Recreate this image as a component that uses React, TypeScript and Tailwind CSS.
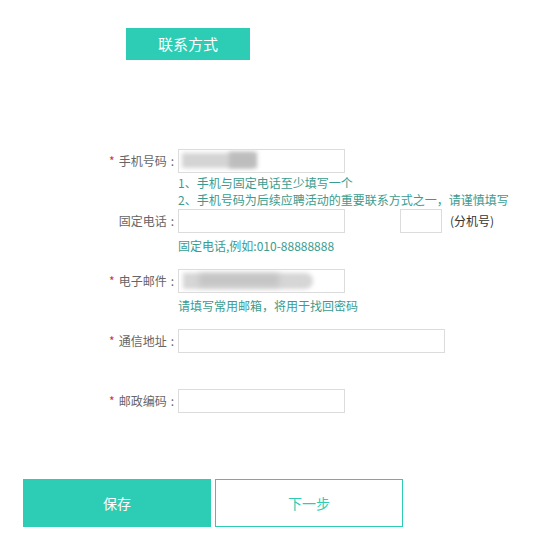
import React from "react"

const font = { fontFamily: '"Noto Sans CJK SC", "Noto Sans", sans-serif' }

function Label({ text, required }: { text: string; required?: boolean }) {
  return (
    <div className="w-[178px] shrink-0 h-[24px] flex items-center justify-end pr-[4px] text-[12px] text-[#666]">
      {required && <span className="text-[#e0302f] mr-[4px] text-[12px]">*</span>}
      <span>{text}</span>
      <span className="ml-[4px]">:</span>
    </div>
  )
}

function Input({ className = "", children }: { className?: string; children?: React.ReactNode }) {
  return (
    <div className={`relative h-[24px] border border-[#dcdcdc] bg-white overflow-hidden ${className}`}>
      {children}
    </div>
  )
}

function Hint({ children, className = "" }: { children: React.ReactNode; className?: string }) {
  return <div className={`text-[12px] leading-[17px] text-[#3a9c8f] ${className}`}>{children}</div>
}

export default function App() {
  return (
    <div className="w-[550px] h-[540px] bg-white relative" style={font}>
      <div className="pt-[28px] pl-[126px]">
        <div className="w-[124px] h-[32px] bg-[#2ccdb4] text-white text-[15px] flex items-center justify-center">
          联系方式
        </div>
      </div>

      <div className="mt-[89px]">
        {/* 手机号码 */}
        <div className="flex h-[60px]">
          <Label text="手机号码" required />
          <div>
            <Input className="w-[167px]">
              <div className="absolute left-[3px] top-[3px] w-[72px] h-[15px] bg-[#d4d4d4] blur-[2px]" />
              <div className="absolute left-[50px] top-[2px] w-[28px] h-[16px] bg-[#bdbdbd] blur-[2px]" />
            </Input>
            <Hint className="mt-[1px]">1、手机与固定电话至少填写一个</Hint>
            <Hint>2、手机号码为后续应聘活动的重要联系方式之一，请谨慎填写</Hint>
          </div>
        </div>

        {/* 固定电话 */}
        <div className="flex h-[60px]">
          <Label text="固定电话" />
          <div>
            <div className="flex items-center">
              <Input className="w-[167px]" />
              <Input className="w-[42px] ml-[55px]" />
              <span className="ml-[8px] text-[12px] text-[#333]">(分机号)</span>
            </div>
            <Hint className="mt-[4px]">固定电话,例如:010-88888888</Hint>
          </div>
        </div>

        {/* 电子邮件 */}
        <div className="flex h-[60px]">
          <Label text="电子邮件" required />
          <div>
            <Input className="w-[167px]">
              <div className="absolute left-[4px] top-[3px] w-[130px] h-[16px] rounded-r-full bg-[#d6d6d6] blur-[2px]" />
              <div className="absolute left-[20px] top-[4px] w-[80px] h-[12px] bg-[#c4c4c4] blur-[3px]" />
            </Input>
            <Hint className="mt-[4px]">请填写常用邮箱，将用于找回密码</Hint>
          </div>
        </div>

        {/* 通信地址 */}
        <div className="flex h-[60px]">
          <Label text="通信地址" required />
          <Input className="w-[267px]" />
        </div>

        {/* 邮政编码 */}
        <div className="flex h-[60px]">
          <Label text="邮政编码" required />
          <Input className="w-[167px]" />
        </div>
      </div>

      <div className="mt-[30px] pl-[23px] flex gap-[4px]">
        <button className="w-[188px] h-[48px] bg-[#2ccdb4] text-white text-[14px]">保存</button>
        <button className="w-[188px] h-[48px] bg-white border border-[#2ccdb4] text-[#2ccdb4] text-[14px]">下一步</button>
      </div>
    </div>
  )
}
